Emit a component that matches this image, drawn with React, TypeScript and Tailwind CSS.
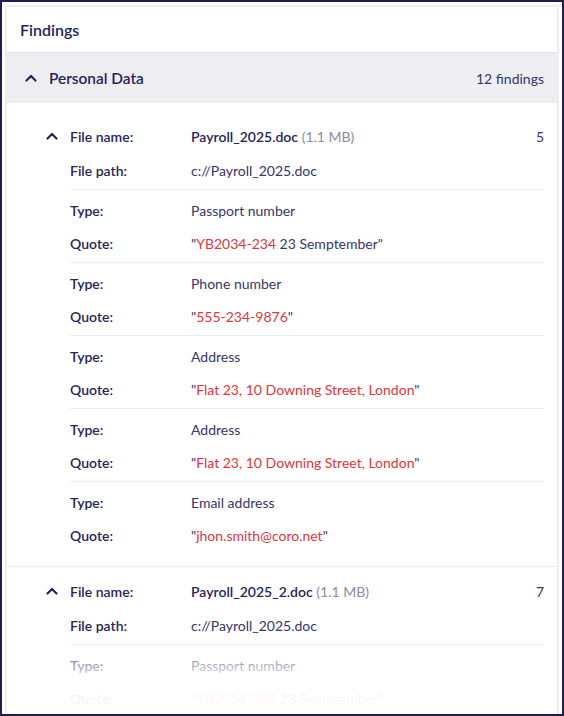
import React from "react";

type Finding = { type: string; quote: React.ReactNode };

const font = { fontFamily: "Lato, 'Noto Sans', sans-serif" };

function Chevron({ className = "" }: { className?: string }) {
  return (
    <svg width="12" height="8" viewBox="0 0 12 8" className={className} fill="none">
      <path d="M1.5 6.5 L6 2 L10.5 6.5" stroke="#27245a" strokeWidth="2.2" strokeLinecap="round" strokeLinejoin="round" />
    </svg>
  );
}

const Red = ({ children }: { children: React.ReactNode }) => <span className="text-[#e0353c]">{children}</span>;

function Row({ label, children }: { label: string; children: React.ReactNode }) {
  return (
    <div className="flex h-[33px] items-center text-[14px]">
      <div className="w-[121px] shrink-0 font-semibold text-[#27245a]">{label}</div>
      <div className="text-[#37356a]">{children}</div>
    </div>
  );
}

function FileBlock({
  name,
  count,
  findings,
  first,
}: {
  name: string;
  count: number;
  findings: Finding[];
  first?: boolean;
}) {
  return (
    <div className={`${first ? "pt-[16px] border-b border-[#ececf2]" : "pt-[7px]"} pb-[12px] pr-[13px]`}>
      <div className="flex h-[34px] items-center text-[14px]">
        <div className="flex w-[63px] shrink-0 justify-end pr-[12px]">
          <Chevron />
        </div>
        <div className="w-[121px] shrink-0 font-semibold text-[#27245a]">File name:</div>
        <div className="flex-1">
          <span className="font-semibold text-[#27245a]">{name}</span>{" "}
          <span className="text-[#8b8aa5]">(1.1 MB)</span>
        </div>
        <div className="text-[#37356a]">{count}</div>
      </div>
      <div className="ml-[63px]">
        <div className="border-b border-[#ececf2] pb-[2px]">
          <div className="flex h-[34px] items-center text-[14px]">
            <div className="w-[121px] shrink-0 font-semibold text-[#27245a]">File path:</div>
            <div className="text-[#37356a]">c://Payroll_2025.doc</div>
          </div>
        </div>
        {findings.map((f, i) => (
          <div
            key={i}
            className={`pt-[4px] pb-[2px] ${i < findings.length - 1 ? "border-b border-[#ececf2]" : ""}`}
          >
            <Row label="Type:">{f.type}</Row>
            <Row label="Quote:">{f.quote}</Row>
          </div>
        ))}
      </div>
    </div>
  );
}

export default function App() {
  const first: Finding[] = [
    { type: "Passport number", quote: <>"<Red>YB2034-234</Red> 23 Semptember"</> },
    { type: "Phone number", quote: <>"<Red>555-234-9876</Red>"</> },
    { type: "Address", quote: <>"<Red>Flat 23, 10 Downing Street, London</Red>"</> },
    { type: "Address", quote: <>"<Red>Flat 23, 10 Downing Street, London</Red>"</> },
    { type: "Email address", quote: <>"<Red>jhon.smith@coro.net</Red>"</> },
  ];
  const second: Finding[] = [
    { type: "Passport number", quote: <>"<Red>YB2034-234</Red> 23 Semptember"</> },
    { type: "Phone number", quote: <>"<Red>555-234-9876</Red>"</> },
  ];

  return (
    <div style={font} className="box-border h-[716px] w-[564px] overflow-hidden border-2 border-[#221c50] bg-white p-[3px]">
      <div className="relative h-[740px] overflow-hidden border-2 border-b-0 border-[#ededf3] bg-white">
        <div className="flex h-[45px] items-center pl-[13px] text-[16px] font-semibold text-[#27245a]">Findings</div>
        <div className="flex h-[51px] items-center border-t border-[#e4e3ec] bg-[#eeedf2] pl-[18px] pr-[13px]">
          <Chevron className="mr-[12px]" />
          <div className="flex-1 pt-[1px] text-[15.4px] font-semibold text-[#27245a]">Personal Data</div>
          <div className="text-[14px] text-[#37356a]">12 findings</div>
        </div>
        <FileBlock name="Payroll_2025.doc" count={5} findings={first} first />
        <FileBlock name="Payroll_2025_2.doc" count={7} findings={second} />
        <div className="pointer-events-none absolute left-0 right-0 top-[632px] h-[80px] bg-gradient-to-b from-white/0 via-white/90 to-white" />
      </div>
    </div>
  );
}
